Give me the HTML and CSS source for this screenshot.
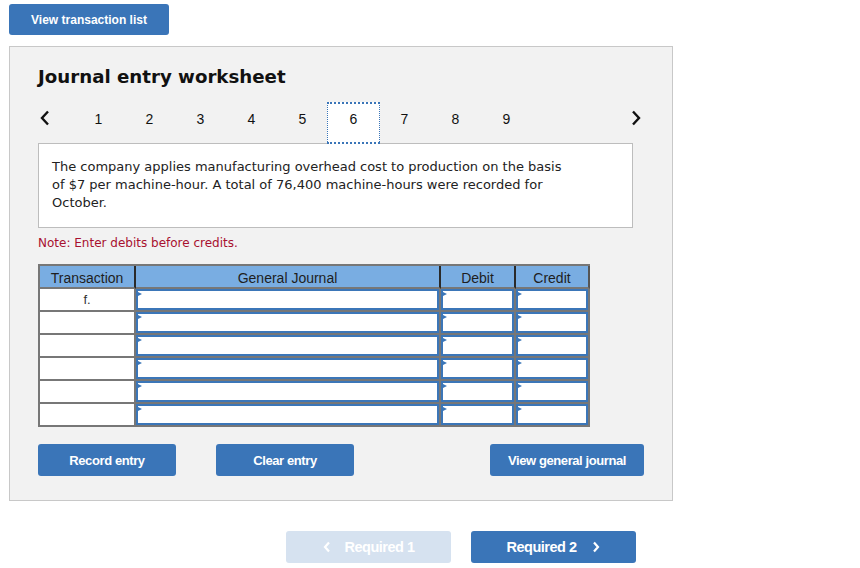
FILE: index.html
```html
<!DOCTYPE html>
<html>
<head>
<meta charset="utf-8">
<link rel="stylesheet" href="styles.css">
</head>
<body>
<button class="top-btn">View transaction list</button>
<section class="panel">
  <h1 class="title">Journal entry worksheet</h1>
  <nav class="steps">
    <span class="arrow prev"><svg width="10" height="16" viewBox="0 0 10 16"><path d="M8 1.5 L2 8 L8 14.5" fill="none" stroke="#111" stroke-width="2.4"/></svg></span>
    <span class="step">1</span>
    <span class="step">2</span>
    <span class="step">3</span>
    <span class="step">4</span>
    <span class="step">5</span>
    <span class="step current">6</span>
    <span class="step">7</span>
    <span class="step">8</span>
    <span class="step">9</span>
    <span class="arrow next"><svg width="10" height="16" viewBox="0 0 10 16"><path d="M2 1.5 L8 8 L2 14.5" fill="none" stroke="#111" stroke-width="2.4"/></svg></span>
  </nav>
  <div class="problem">The company applies manufacturing overhead cost to production on the basis of $7 per machine-hour. A total of 76,400 machine-hours were recorded for October.</div>
  <p class="note">Note: Enter debits before credits.</p>
  <div class="journal">
    <div class="hd">Transaction</div>
    <div class="hd">General Journal</div>
    <div class="hd">Debit</div>
    <div class="hd">Credit</div>

    <div class="tr">f.</div><div class="in"></div><div class="in"></div><div class="in"></div>
    <div class="tr"></div><div class="in"></div><div class="in"></div><div class="in"></div>
    <div class="tr"></div><div class="in"></div><div class="in"></div><div class="in"></div>
    <div class="tr"></div><div class="in"></div><div class="in"></div><div class="in"></div>
    <div class="tr"></div><div class="in"></div><div class="in"></div><div class="in"></div>
    <div class="tr"></div><div class="in"></div><div class="in"></div><div class="in"></div>
  </div>
  <div class="actions">
    <button class="btn btn-record">Record entry</button>
    <button class="btn btn-clear">Clear entry</button>
    <button class="btn btn-view">View general journal</button>
  </div>
</section>
<div class="req-row">
  <button class="req req-disabled"><svg width="8" height="12" viewBox="0 0 8 12"><path d="M6 1.5 L2 6 L6 10.5" fill="none" stroke="#fff" stroke-width="2.2"/></svg><span>Required 1</span></button>
  <button class="req req-active"><span>Required 2</span><svg width="8" height="12" viewBox="0 0 8 12"><path d="M2 1.5 L6 6 L2 10.5" fill="none" stroke="#fff" stroke-width="2.2"/></svg></button>
</div>
</body>
</html>
```

FILE: styles.css
```css
* { box-sizing: border-box; }

body {
  margin: 0;
  padding: 4px 0 0 9px;
  font-family: "Liberation Sans", Arial, sans-serif;
  background: #fff;
  color: #222;
}

button {
  font-family: inherit;
  cursor: pointer;
}

.top-btn {
  display: block;
  width: 160px;
  height: 31px;
  border: none;
  border-radius: 3px;
  background: #3a75b8;
  color: #fff;
  font-weight: bold;
  font-size: 12px;
  padding: 0;
}

.panel {
  margin-top: 11px;
  width: 664px;
  border: 1px solid #c8c8c8;
  background: #f2f2f2;
  padding: 18px 0 24px 28px;
}

.title {
  margin: 0;
  font-family: "DejaVu Sans", Verdana, sans-serif;
  font-weight: bold;
  font-size: 18.2px;
  line-height: 24px;
  color: #111;
}

.steps {
  margin-top: 13px;
  display: flex;
  align-items: flex-start;
  height: 42px;
  width: 605px;
}

.arrow {
  display: flex;
  align-items: center;
  justify-content: center;
  height: 16px;
  margin-top: 8px;
}

.prev { width: 35px; justify-content: flex-start; padding-left: 2px; }
.next { margin-left: auto; width: 14px; }

.step {
  width: 51px;
  height: 42px;
  text-align: center;
  font-size: 14px;
  line-height: 16px;
  padding-top: 9px;
  color: #111;
}

.step.current {
  background: #fff;
  border: 1px dotted #3a75b8;
  border-width: 2px 1px;
  margin: 0 -1px;
  width: 53px;
  padding-top: 7px;
}

.problem {
  margin-top: -1px;
  width: 595px;
  background: #fff;
  border: 1px solid #bdbdbd;
  padding: 14px 58px 15px 13px;
  font-family: "DejaVu Sans", Verdana, sans-serif;
  font-size: 13px;
  line-height: 18px;
  color: #222;
}

.note {
  margin: 8px 0 0;
  font-family: "DejaVu Sans", Verdana, sans-serif;
  font-size: 12px;
  line-height: 15px;
  color: #a8102f;
}

.journal {
  margin-top: 13px;
  display: grid;
  grid-template-columns: 96px 305px 75px 74px;
  grid-auto-rows: 23px;
  width: 552px;
  border-top: 2px solid #777;
  border-left: 2px solid #777;
}

.journal > div {
  border-right: 2px solid #777;
  border-bottom: 2px solid #777;
  background: #fff;
  position: relative;
}

.journal .hd {
  background: #79ade2;
  border-right-color: #2a2a2a;
  text-align: center;
  font-size: 14px;
  line-height: 22px;
  padding-top: 1px;
  color: #1e1e1e;
}

.journal .hd:nth-child(4) { border-right-color: #555; }

.journal .tr {
  text-align: center;
  font-size: 13px;
  line-height: 20px;
  padding-top: 1px;
  color: #333;
}

.journal .in {
  box-shadow: inset 0 0 0 2px #3b76b8;
}

.journal .in::before {
  content: "";
  position: absolute;
  top: 2px;
  left: 0;
  border-left: 6px solid #3b76b8;
  border-top: 3px solid transparent;
  border-bottom: 3px solid transparent;
}

.actions {
  margin-top: 17px;
  display: flex;
}

.btn {
  height: 32px;
  border: none;
  border-radius: 3px;
  background: #3a75b8;
  color: #fff;
  font-family: "Liberation Sans", Arial, sans-serif;
  font-weight: bold;
  font-size: 13px;
  letter-spacing: -0.4px;
  padding: 0;
}

.btn-record { width: 138px; }
.btn-clear { width: 138px; margin-left: 40px; }
.btn-view { width: 154px; margin-left: 136px; }

.req-row {
  margin-top: 30px;
  padding-left: 277px;
  display: flex;
  gap: 20px;
}

.req {
  width: 165px;
  height: 32px;
  border: none;
  border-radius: 3px;
  color: #fff;
  font-family: "Liberation Sans", Arial, sans-serif;
  font-weight: bold;
  font-size: 14.5px;
  letter-spacing: -0.5px;
  display: flex;
  align-items: center;
  justify-content: center;
  padding: 0;
}

.req-disabled { background: #d6e2f0; gap: 14px; }
.req-active { background: #3a75b8; gap: 16px; }
```
